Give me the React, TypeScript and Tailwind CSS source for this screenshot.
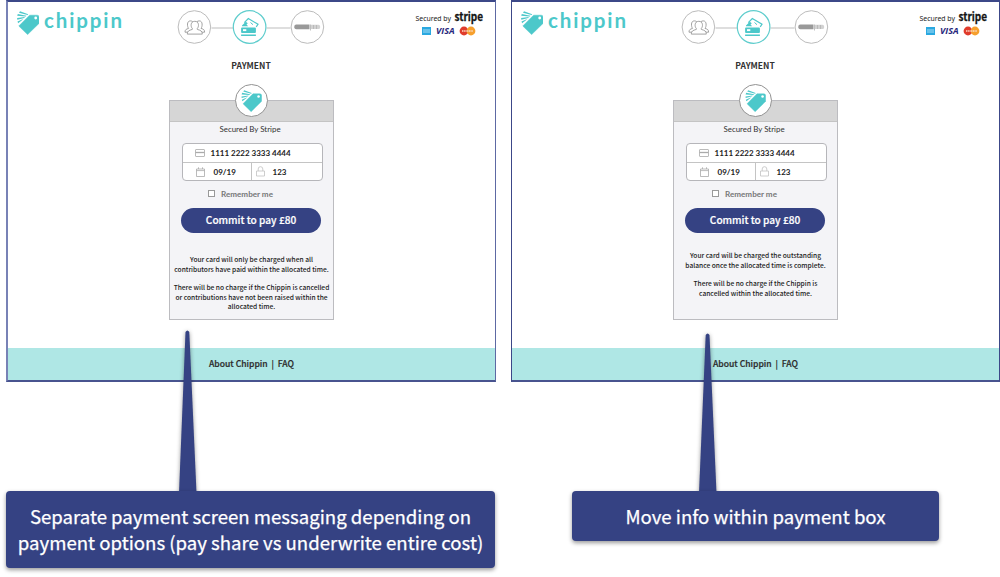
import React from "react";

const TEAL = "#4cc8ca";

function Tag({ className }: { className: string }) {
  return (
    <svg viewBox="0 0 22 24" className={className} fill={TEAL}>
      <path d="M12.600 4.200H20.200Q22 4.200 22 6V12.400L10.600 23.600 1.800 15Z" stroke={TEAL} strokeWidth=".5" strokeLinejoin="round" />
      <path d="M2 1.700 3 .2 11.200 3.300 10.600 4ZM.2 4.800 .8 3 9.400 4.700 8.800 5.500ZM.3 8.700 .1 7 7.800 6 7.300 6.900ZM1.100 12.200.5 10.600 6.200 7.900 5.300 9.100Z" />
      <circle cx="18.700" cy="7" r="1.400" fill="#fff" />
    </svg>
  );
}

function Logo() {
  return (
    <div className="flex h-9 w-[112px]">
      <Tag className="mt-[9px] h-6 w-[22px] shrink-0" />
      <svg viewBox="0 0 90 36" className="ml-[4px] h-9 w-[90px] shrink-0 overflow-visible">
        <text x="1" y="26" textLength="78" fontSize="20.5" fontWeight="700" fill={TEAL} className="font-['Lato',sans-serif]">
          chippin
        </text>
      </svg>
    </div>
  );
}

function Steps() {
  return (
    <svg viewBox="177 8 149 38" className="h-[38px] w-[149px] shrink-0" fill="none">
      <path d="M211.500 28H233M266.500 28H290.500" stroke="#bdbdbd" />
      <circle cx="194.400" cy="27" r="16.300" stroke="#bcbcbc" />
      <circle cx="249.600" cy="27" r="16.300" stroke="#5fcdcd" strokeWidth="1.200" />
      <circle cx="307.400" cy="27" r="16.300" stroke="#bcbcbc" />
      <g stroke="#999" strokeWidth=".9" fill="#fff">
        <path d="M185 32.200c0-2.500 1-3 3.600-3.800-1.500-1.700-2-7.500 1.700-7.500s3.700 3.500 2.700 6.300l2 5ZM204.600 32.200c0-2.500-1-3-3.600-3.800 1.500-1.700 2-7.500-1.700-7.500s-3.700 3.500-2.700 6.300l-2 5Z" />
        <path d="M187.300 34.100c0-3.200 1.600-3.600 5-4.700v-1c-1.700-1.400-2.100-7.100 2.500-7.100s4.200 5.700 2.500 7.100v1c3.400 1.100 5 1.500 5 4.700Z" />
      </g>
      <path d="M242 26.300v-.8l3.800-3.800 2 1.500-1.300 1.400 1.700 1.700Z" fill={TEAL} />
      <path d="M244.300 22.700 248.300 18.500 258 24.300 256.200 26.800" stroke={TEAL} strokeWidth="1.200" />
      <path d="M250.500 22.500l2.500 2.200" stroke={TEAL} />
      <path d="M242 27.500H255q.9 0 .9.900V32q0 .9-.9.900H242q-.9 0-.9-.9v-3.600q0-.9.900-.9ZM241.100 34.400H255.900V36.100H241.100Z" fill={TEAL} />
      <rect x="243" y="29.200" width="3.300" height="1.900" fill="#fff" />
      <path d="M296.300 24.500h13.200v4.800h-13.200a2 2 0 0 1-2-2v-.8a2 2 0 0 1 2-2Z" fill="#999" />
      <path d="M310.500 24.800h8a1.600 1.600 0 0 1 1.600 1.600v1a1.600 1.600 0 0 1-1.600 1.600h-8Z" fill="#d2d2d2" />
      <path d="M310.500 24.500v6M313.500 25v4M316.500 25v4" stroke="#b4b4b4" strokeWidth=".8" />
    </svg>
  );
}

function Secured() {
  return (
    <svg viewBox="413 2 73 36" className="h-[36px] w-[73px] shrink-0 overflow-visible">
      <text x="415.500" y="21" textLength="35.500" lengthAdjust="spacingAndGlyphs" fontSize="7.500" fill="#222" className="font-['Noto_Sans',sans-serif]">
        Secured by
      </text>
      <text x="454.500" y="21.300" textLength="28.500" lengthAdjust="spacingAndGlyphs" fontSize="11.500" fontWeight="700" fill="#151515" stroke="#151515" strokeWidth=".3" className="font-['Noto_Sans_CJK_SC',sans-serif]">
        stripe
      </text>
      <rect x="422" y="27" width="9" height="8" fill="#2aa8e0" />
      <path d="M423 30h7M423 32h7" stroke="#a5dcf4" />
      <text x="436" y="34.300" textLength="18.500" lengthAdjust="spacingAndGlyphs" fontSize="9" fontWeight="700" fontStyle="italic" fill="#28287c" className="font-['Open_Sans',sans-serif]">
        VISA
      </text>
      <circle cx="464" cy="31" r="4.400" fill="#e03c2c" />
      <circle cx="471" cy="31" r="4.400" fill="#f6a02d" />
      <path d="M462 31h11" stroke="#fbd9c4" strokeWidth="1.300" strokeDasharray="1.200 .5" />
    </svg>
  );
}

function Card({ copy, gap }: { copy: string[][]; gap: string }) {
  return (
    <section className="mx-auto flex h-[220px] w-[165px] flex-col items-center border border-[#bcbcc0] bg-[#f4f4f7]">
      <div className="flex h-[21px] w-full shrink-0 justify-center border-b border-[#c4c4c4] bg-[#d6d6d6]">
        <div className="-mt-[17px] -ml-px flex size-[33px] shrink-0 items-center justify-center rounded-full border-[1.5px] border-[#929292] bg-white">
          <Tag className="h-[22px] w-[21px]" />
        </div>
      </div>
      <p className="-ml-[3px] h-[21px] font-['Lato',sans-serif] text-[7.9px] leading-[14px] text-[#333]">Secured By Stripe</p>
      <div className="ml-px flex h-[38px] w-[141px] shrink-0 flex-col rounded-[4px] border border-[#b6b6ba] bg-white font-['Lato',sans-serif] text-[8px] font-bold text-[#222]">
        <div className="flex h-[19px] items-center border-b border-[#c4c4c4]">
          <svg viewBox="0 0 10 8" className="ml-[12px] h-2 w-[10px]" fill="none" stroke="#aaa" strokeWidth=".8">
            <rect x=".5" y=".5" width="9" height="7" rx=".5" />
            <path d="M.5 3.500h9" strokeWidth="1.300" />
          </svg>
          <span className="ml-[6px]">1111 2222 3333 4444</span>
        </div>
        <div className="flex h-[17px] items-center">
          <div className="flex h-full w-[69px] items-center border-r border-[#c4c4c4]">
            <svg viewBox="0 0 9 10" className="ml-[13px] h-[10px] w-[9px]" fill="none" stroke="#aaa" strokeWidth=".8">
              <path d="M.5 2h8v7.500h-8ZM.5 3.600h8M2.500.3V2M6.500.3V2" />
            </svg>
            <span className="ml-[9px]">09/19</span>
          </div>
          <svg viewBox="0 0 9 11" className="ml-[4px] h-[11px] w-[9px]" fill="none" stroke="#c2c2c2" strokeWidth=".8">
            <path d="M.5 5h8v5h-8ZM2.200 5V3a2.300 2.300 0 0 1 4.600 0v2" />
          </svg>
          <span className="ml-[8px]">123</span>
        </div>
      </div>
      <div className="mt-[6px] flex h-[14px] w-full items-center pl-[38px]">
        <span className="-mt-px size-[7px] border border-[#999] bg-white" />
        <span className="ml-[6px] font-['Lato',sans-serif] text-[8.1px] font-bold text-[#777]">Remember me</span>
      </div>
      <button className="mt-[7px] -ml-px h-[25px] w-[140px] shrink-0 rounded-full bg-[#354283] font-['Noto_Sans_CJK_SC',sans-serif] text-[10.1px] leading-[22px] font-medium text-white [-webkit-text-stroke:0.2px_white]">
        <span className="-mt-[2px] block">Commit to pay £80</span>
      </button>
      <div className={`${gap} flex w-full flex-col gap-[9px] text-center font-['Noto_Sans_CJK_SC',sans-serif] text-[6.65px] leading-[9.6px] font-medium whitespace-nowrap text-[#1c1c1c]`}>
        {copy.map((lines) => (
          <p key={lines[0]} className="-mx-1">
            {lines.map((line) => (
              <span key={line} className="block">{line}</span>
            ))}
          </p>
        ))}
      </div>
    </section>
  );
}

function Panel({ frame, copy, gap }: { frame: string; copy: string[][]; gap: string }) {
  return (
    <article className={`${frame} flex h-[382px] shrink-0 flex-col border-t-2 border-b-2 border-t-[#3c4888] border-b-[#48548f] bg-white`}>
      <header className="flex h-[50px] shrink-0">
        <div className="ml-[9px]"><Logo /></div>
        <div className="mt-[6px] ml-[48px]"><Steps /></div>
        <div className="ml-[87px]"><Secured /></div>
      </header>
      <h2 className="h-[48px] pt-[7px] pr-px text-center font-['Noto_Sans_CJK_SC',sans-serif] text-[8.5px] leading-[12px] font-bold text-[#333]">PAYMENT</h2>
      <Card copy={copy} gap={gap} />
      <footer className="mt-auto h-[32px] bg-[#afe7e5] text-center font-['Noto_Sans_CJK_SC',sans-serif] text-[8.6px] leading-[31px] font-medium text-[#2c2c2c] [-webkit-text-stroke:0.2px_#2c2c2c]">
        About Chippin&nbsp; |&nbsp; FAQ
      </footer>
    </article>
  );
}

export default function App() {
  return (
    <main className="relative h-[577px] w-[1000px] overflow-hidden bg-white">
      <div className="flex gap-[15px] pl-[6px]">
        <Panel
          frame="w-[490px] border-l-2 border-r border-l-[#7882b6] border-r-[#5d69a3]"
          gap="mt-[22px]"
          copy={[
            ["Your card will only be charged when all", "contributors have paid within the allocated time."],
            ["There will be no charge if the Chippin is cancelled", "or contributions have not been raised within the", "allocated time."],
          ]}
        />
        <Panel
          frame="w-[489px] border-l border-r border-l-[#3c4888] border-r-[#3c4888]"
          gap="mt-[18px]"
          copy={[
            ["Your card will be charged the outstanding", "balance once the allocated time is complete."],
            ["There will be no charge if the Chippin is", "cancelled within the allocated time."],
          ]}
        />
      </div>
      <svg viewBox="0 0 1000 577" className="absolute inset-0 h-[577px] w-[1000px] drop-shadow-[0_1px_2px_rgba(0,0,0,0.4)]" fill="#354283">
        <path d="M185.500 332q1.900-3 3.800 0L196.500 493H179Z" />
        <path d="M705.700 335q1.900-3 3.800 0L716.500 493H699Z" />
      </svg>
      <div className="absolute top-[491px] left-[6px] h-[77px] w-[489px] rounded-[4px] bg-[#354283] pt-[12px] text-center font-['Noto_Sans_CJK_SC',sans-serif] text-[18.6px] leading-[26px] whitespace-nowrap text-white shadow-[0_2px_4px_rgba(0,0,0,0.4)] [-webkit-text-stroke:0.25px_white]">
        <p>Separate payment screen messaging depending on</p>
        <p>payment options (pay share vs underwrite entire cost)</p>
      </div>
      <div className="absolute top-[491px] left-[572px] h-[50px] w-[367px] rounded-[4px] bg-[#354283] pt-[12px] text-center font-['Noto_Sans_CJK_SC',sans-serif] text-[18.6px] leading-[26px] whitespace-nowrap text-white shadow-[0_2px_4px_rgba(0,0,0,0.4)] [-webkit-text-stroke:0.25px_white]">
        <p>Move info within payment box</p>
      </div>
    </main>
  );
}
